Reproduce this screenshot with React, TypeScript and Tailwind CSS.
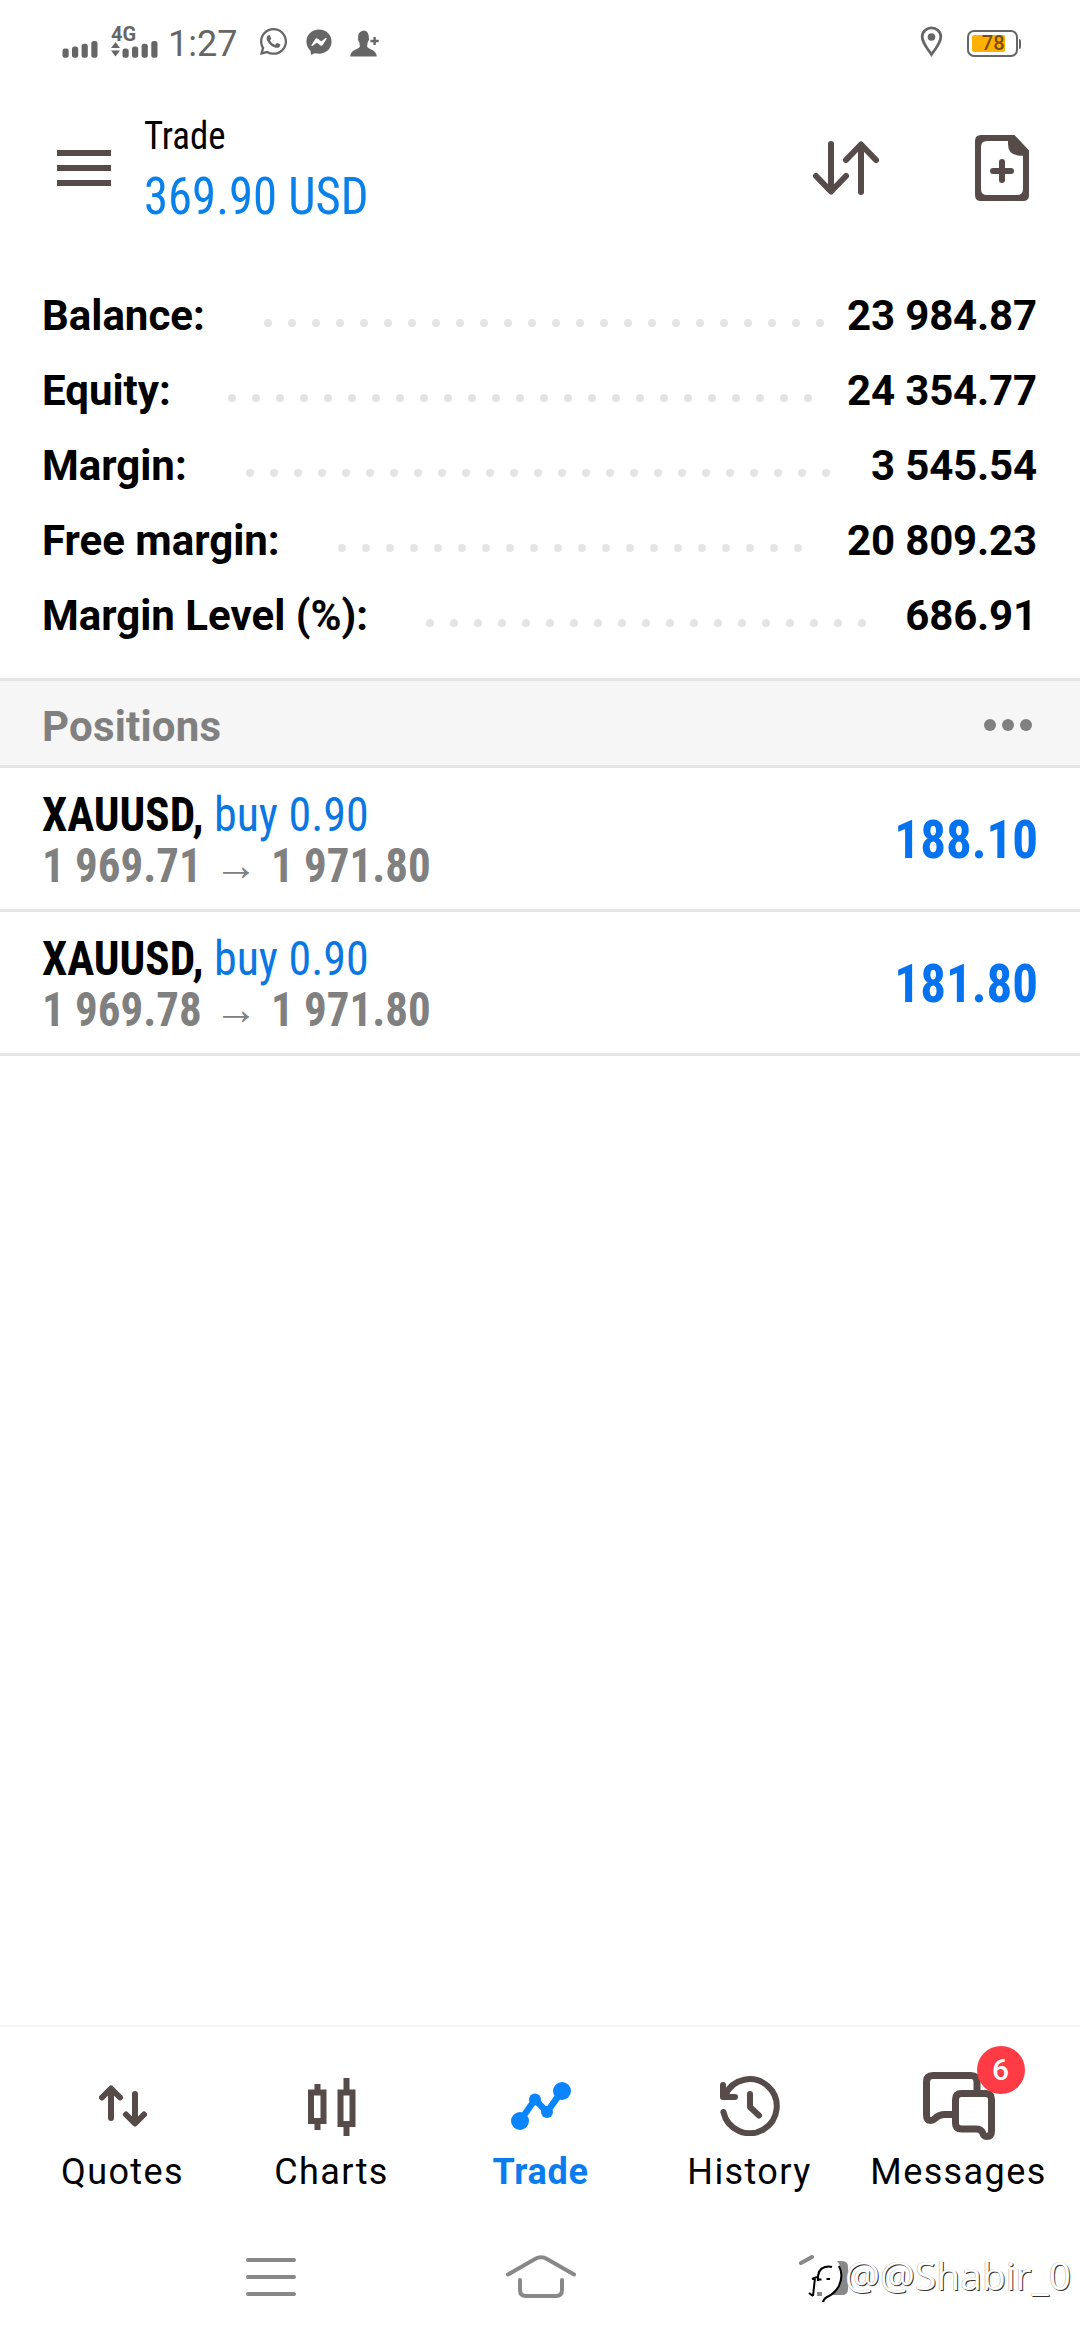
import type { ReactNode } from "react";
import { FaFacebookMessenger, FaWhatsapp } from "react-icons/fa";

const INK = "#574b49";

type SummaryRow = { label: string; value: string; dotsStart: number; dots: number };

const summary: SummaryRow[] = [
  { label: "Balance:", value: "23 984.87", dotsStart: 264, dots: 24 },
  { label: "Equity:", value: "24 354.77", dotsStart: 228, dots: 25 },
  { label: "Margin:", value: "3 545.54", dotsStart: 246, dots: 25 },
  { label: "Free margin:", value: "20 809.23", dotsStart: 338, dots: 20 },
  { label: "Margin Level (%):", value: "686.91", dotsStart: 426, dots: 19 },
];

const positions = [
  { symbol: "XAUUSD,", side: "buy 0.90", open: "1 969.71", current: "1 971.80", profit: "188.10" },
  { symbol: "XAUUSD,", side: "buy 0.90", open: "1 969.78", current: "1 971.80", profit: "181.80" },
];

function SignalBars() {
  return (
    <svg width="36" height="17" viewBox="0 0 36 17" fill="#666">
      <rect x="0.5" y="7.5" width="6.2" height="9.3" rx="2.5" />
      <rect x="10" y="5.5" width="6.2" height="11.3" rx="2.5" />
      <rect x="19.6" y="2.7" width="6.2" height="14.1" rx="2.5" />
      <rect x="29.3" y="0" width="6.2" height="16.8" rx="2.5" />
    </svg>
  );
}

function StatusBar() {
  return (
    <div className="flex h-[88px] items-start pl-[62px] pr-[59px] font-[Roboto] text-[#666]">
      <div className="pt-[41px]">
        <SignalBars />
      </div>
      <div className="ml-[13px] flex h-[58px] w-[48px] flex-col pt-[25px]">
        <span className="text-[20px] font-bold leading-[18px]">4G</span>
        <div className="-mt-[2px] flex items-start">
          <svg width="9" height="15" viewBox="0 0 9 15" fill="#666" className="mt-[1px]">
            <path d="M0 6 4.5 0 9 6ZM0 8.5 4.5 14.5 9 8.5Z" />
          </svg>
          <span className="ml-[2px]">
            <SignalBars />
          </span>
        </div>
      </div>
      <span className="ml-[9px] mt-[23px] w-[80px] text-[36px] leading-[42px]">1:27</span>
      <FaWhatsapp className="ml-[10px] mt-[26px] size-[31px]" />
      <FaFacebookMessenger className="ml-[17px] mt-[29px] size-[26px]" />
      <svg className="ml-[18px] mt-[30px]" width="30" height="27" viewBox="0 0 30 27" fill="#666">
        <path d="M13.500 .5C17 .5 19 3.500 18.800 7.500C19.500 9 18.700 11 17.800 12C17.300 15 17 15.500 17.300 17C18.500 19.500 26.500 19.500 26.800 26.600H.2C.5 19.500 8.500 19.500 9.700 17C10 15.500 9.700 15 9.200 12C8.300 11 7.500 9 8.200 7.500C8 4 9.500 1.500 13.500 .5Z" />
        <path d="M20.500 11h8.200M24.600 7v8" stroke="#666" strokeWidth="2.400" />
      </svg>
      <div className="grow" />
      <svg className="mt-[26px]" width="23" height="31" viewBox="0 0 23 31" fill="none">
        <path d="M11.500 28.500C7 22 2.200 17 2.200 10.800A9.300 9 0 0 1 20.800 10.800C20.800 17 16 22 11.500 28.500Z" stroke="#666" strokeWidth="2.800" />
        <circle cx="11.500" cy="11" r="3.800" fill="#666" />
      </svg>
      <div className="ml-[24px] mt-[30px] flex items-center">
        <div className="h-[27px] w-[51px] rounded-[7px] border-[2.5px] border-[#666] p-[2.500px]">
          <div className="flex h-[17px] w-[33px] items-center justify-end rounded-[2px] bg-[#ffb000] text-[20px] font-medium leading-[17px] text-[#75500d]">
            78
          </div>
        </div>
        <div className="ml-px h-[10px] w-[2px] rounded-r bg-[#666]" />
      </div>
    </div>
  );
}

function Header() {
  return (
    <header className="flex h-[160px] items-start pl-[57px] pr-[51px]">
      <div className="mt-[62px] flex w-[54px] flex-col gap-[9px]">
        <div className="h-[6px] bg-[#574b49]" />
        <div className="h-[6px] bg-[#574b49]" />
        <div className="h-[6px] bg-[#574b49]" />
      </div>
      <div className="ml-[33px] mt-[25px] grow font-['Roboto_Condensed']">
        <h1 className="origin-left scale-x-[0.97] text-[38px] leading-[46px] text-black">Trade</h1>
        <p className="mt-[8px] origin-left scale-x-[0.955] text-[51px] leading-[60px] text-[#0a80ea] [font-weight:440]">369.90 USD</p>
      </div>
      <svg className="mt-[53px]" width="66" height="54" viewBox="0 0 66 54" fill="none" stroke={INK} strokeWidth="6" strokeLinecap="round" strokeLinejoin="round">
        <path d="M18 3V50M3 35 18 50.500 33 35M48 51V4M33 19 48 3.500 63 19" />
      </svg>
      <svg className="ml-[96px] mt-[47px]" width="54" height="66" viewBox="0 0 54 66">
        <path
          fill={INK}
          fillRule="evenodd"
          d="M6 0H39.500L54 15.500V60Q54 66 48 66H6Q0 66 0 60V6Q0 0 6 0ZM12 6Q6 6 6 12V54Q6 60 12 60H42Q48 60 48 54V20.700H45Q33 20.500 33 9V6Z"
        />
        <path d="M18 36H36M27 27V45" stroke={INK} strokeWidth="6" strokeLinecap="round" />
      </svg>
    </header>
  );
}

function Summary() {
  return (
    <section className="pt-[30px]">
      {summary.map((row) => (
        <div key={row.label} className="relative flex h-[75px] items-center justify-between pl-[42px] pr-[43px] font-[Roboto] text-[42px] font-bold leading-[75px] text-black">
          <span>{row.label}</span>
          <span className="tracking-[-0.150px]">{row.value}</span>
          <div className="absolute top-[41px] flex gap-[16px]" style={{ left: row.dotsStart }}>
            {Array.from({ length: row.dots }, (_, i) => (
              <i key={i} className="size-[8px] rounded-full bg-[#e4e4e4]" />
            ))}
          </div>
        </div>
      ))}
    </section>
  );
}

function Positions() {
  return (
    <section className="mt-[25px]">
      <div className="flex h-[90px] items-center justify-between border-y-[3px] border-[#e5e5e5] bg-[#f6f6f6] pl-[42px] pr-[48px]">
        <h2 className="pt-[7px] font-[Roboto] text-[42px] font-bold leading-[50px] tracking-[0.2px] text-[#808080]">Positions</h2>
        <div className="flex gap-[6px] pt-[3px]">
          <i className="size-[12px] rounded-full bg-[#808080]" />
          <i className="size-[12px] rounded-full bg-[#808080]" />
          <i className="size-[12px] rounded-full bg-[#808080]" />
        </div>
      </div>
      {positions.map((p) => (
        <div key={p.open} className="flex h-[144px] items-center justify-between border-b-[3px] border-[#e5e5e5] pl-[42px] pr-[42px] font-['Roboto_Condensed']">
          <div className="pt-[2px] text-[48px] leading-[51px]">
            <p className="flex">
              <span className="w-[172px] origin-left scale-x-[0.940] font-bold text-black">{p.symbol}</span>
              <span className="origin-left scale-x-[0.957] text-[#0a78e0] [font-weight:440]">{p.side}</span>
            </p>
            <p className="flex font-bold text-[#808080]">
              <span className="w-[159px] origin-left scale-x-[0.937] whitespace-nowrap">{p.open}</span>
              <span className="w-[70px] text-center font-['Roboto_Condensed',serif] text-[44px]">→</span>
              <span className="w-[159px] origin-left scale-x-[0.937] whitespace-nowrap">{p.current}</span>
            </p>
          </div>
          <span className="origin-right scale-x-[0.945] pt-[2px] text-[54px] font-bold leading-[60px] text-[#0573f0]">{p.profit}</span>
        </div>
      ))}
    </section>
  );
}

function QuotesIcon() {
  return (
    <svg className="mt-[13px]" width="48" height="42" viewBox="0 0 48 42" fill="none" stroke={INK} strokeWidth="6" strokeLinecap="round" strokeLinejoin="round">
      <path d="M12 33V4M3 12.500 12 3.500 21 12.500M36 9V38M27 29.500 36 38.500 45 29.500" />
    </svg>
  );
}

function ChartsIcon() {
  return (
    <svg className="mt-[6px]" width="48" height="58" viewBox="0 0 48 58" fill="none" stroke={INK} strokeWidth="6">
      <path d="M3 14.500H15.500V43H3ZM32.500 14.500H44.500V46H32.500ZM9.500 6V12M9.500 45V52M38.500 0V12M38.500 48V58" />
    </svg>
  );
}

function TradeIcon() {
  return (
    <svg className="mt-[10px]" width="60" height="48" viewBox="0 0 60 48" fill="#0a84ff">
      <circle cx="9" cy="39" r="9" />
      <circle cx="24" cy="17.500" r="6" />
      <circle cx="36" cy="30" r="6" />
      <circle cx="51" cy="9" r="9" />
      <path d="M9 39 24 17.500 36 30 51 9" fill="none" stroke="#0a84ff" strokeWidth="6.500" />
    </svg>
  );
}

function HistoryIcon() {
  return (
    <svg className="mt-[4px]" width="60" height="60" viewBox="0 0 60 60" fill="none" stroke={INK} strokeWidth="6" strokeLinecap="round" strokeLinejoin="round">
      <path d="M3.400 36A27 27 0 1 0 5.200 19M3 9V21H15M30 18V31L39 39.500" />
      <path d="M2 21 6 14 10 21Z" fill={INK} stroke="none" />
    </svg>
  );
}

function MessagesIcon() {
  return (
    <div className="relative">
      <svg width="72" height="68" viewBox="0 0 72 68" fill="none" stroke={INK} strokeWidth="7" strokeLinecap="round" strokeLinejoin="round">
        <path d="M54 19V10Q54 3.500 48 3.500H10Q3.500 3.500 3.500 10V43Q3.500 48.500 8 48.500Q10 48.500 12 46.500Q16 42.500 22 42.500H31" />
        <path d="M38.500 21.500H62.500Q68.500 21.500 68.500 27.500V59Q68.500 64.500 63.500 64.500Q60.500 64.500 59.500 60.500Q58 57 53 57H38.500Q32.500 57 32.500 51V27.500Q32.500 21.500 38.500 21.500Z" />
      </svg>
      <span className="absolute -top-[26px] left-[54px] flex size-[48px] items-center justify-center rounded-full bg-[#ff3b46] font-[Roboto] text-[30px] font-medium leading-[48px] text-white">
        6
      </span>
    </div>
  );
}

function Tab({ label, active, children }: { label: string; active?: boolean; children: ReactNode }) {
  return (
    <div className="flex w-[209px] flex-col items-center">
      <div className="flex h-[80px] items-start">{children}</div>
      <span
        className={
          active
            ? "font-[Roboto] text-[36px] font-bold leading-[40px] tracking-[0.700px] text-[#0a7cf0]"
            : "font-[Roboto] text-[36px] leading-[40px] tracking-[1.400px] text-black"
        }
      >
        {label}
      </span>
    </div>
  );
}

function TabBar() {
  return (
    <nav className="flex h-[200px] justify-center border-t-2 border-[#f4f4f4] pl-px pt-[45px]">
      <Tab label="Quotes"><QuotesIcon /></Tab>
      <Tab label="Charts"><ChartsIcon /></Tab>
      <Tab label="Trade" active><TradeIcon /></Tab>
      <Tab label="History"><HistoryIcon /></Tab>
      <Tab label="Messages"><MessagesIcon /></Tab>
    </nav>
  );
}

function SystemNav() {
  return (
    <div className="relative flex h-[115px] items-start pl-[246px] pt-[30px]">
      <svg width="50" height="40" viewBox="0 0 50 40" stroke="#888" strokeWidth="4" strokeLinecap="round" className="mt-[2px]">
        <path d="M2 3H48M2 20H48M2 37H48" />
      </svg>
      <svg className="ml-[210px]" width="70" height="43" viewBox="0 0 70 43" fill="none" stroke="#888" strokeWidth="4" strokeLinecap="round">
        <path d="M2 19.500 29 4Q35 0.500 41 4L68 19.500M14 25V35Q14 41 20 41H50Q56 41 56 35V25" />
      </svg>
      <svg className="ml-[222px]" width="52" height="50" viewBox="0 0 52 50" fill="none">
        <path d="M3 8 14 2" stroke="#888" strokeWidth="4" strokeLinecap="round" />
        <path d="M36 6H44Q50 6 50 12V34Q50 40 44 40H34Z" fill="#888" />
        <path d="M19 37H24V41H19Z" fill="#888" />
        <path d="M22 18Q24 10 30 6H39Q46 14 44 26Q42 36 30 42Q34 36 24 33Z" fill="#fff" />
        <path d="M20 26Q19 14 27 12Q31 11 34 12" stroke="#000" strokeWidth="2.200" />
        <path d="M41 11Q46 20 41 31Q37 38 31 41Q26 43 25 47" stroke="#000" strokeWidth="2.200" />
        <path d="M14 24 19 22M17 23 15 41M11 38 15 41M20 24.500H23.500M28.500 24H32" stroke="#000" strokeWidth="2" />
      </svg>
      <span className="absolute left-[845px] top-[23px] font-['Open_Sans'] text-[39px] leading-[54px] text-white [text-shadow:1px_1px_0_#333,-0.500px_0_0_#aaa]">
        @@Shabir_0
      </span>
    </div>
  );
}

export default function App() {
  return (
    <div className="flex h-[2340px] w-[1080px] flex-col overflow-hidden bg-white">
      <StatusBar />
      <Header />
      <Summary />
      <Positions />
      <main className="grow" />
      <TabBar />
      <SystemNav />
    </div>
  );
}
